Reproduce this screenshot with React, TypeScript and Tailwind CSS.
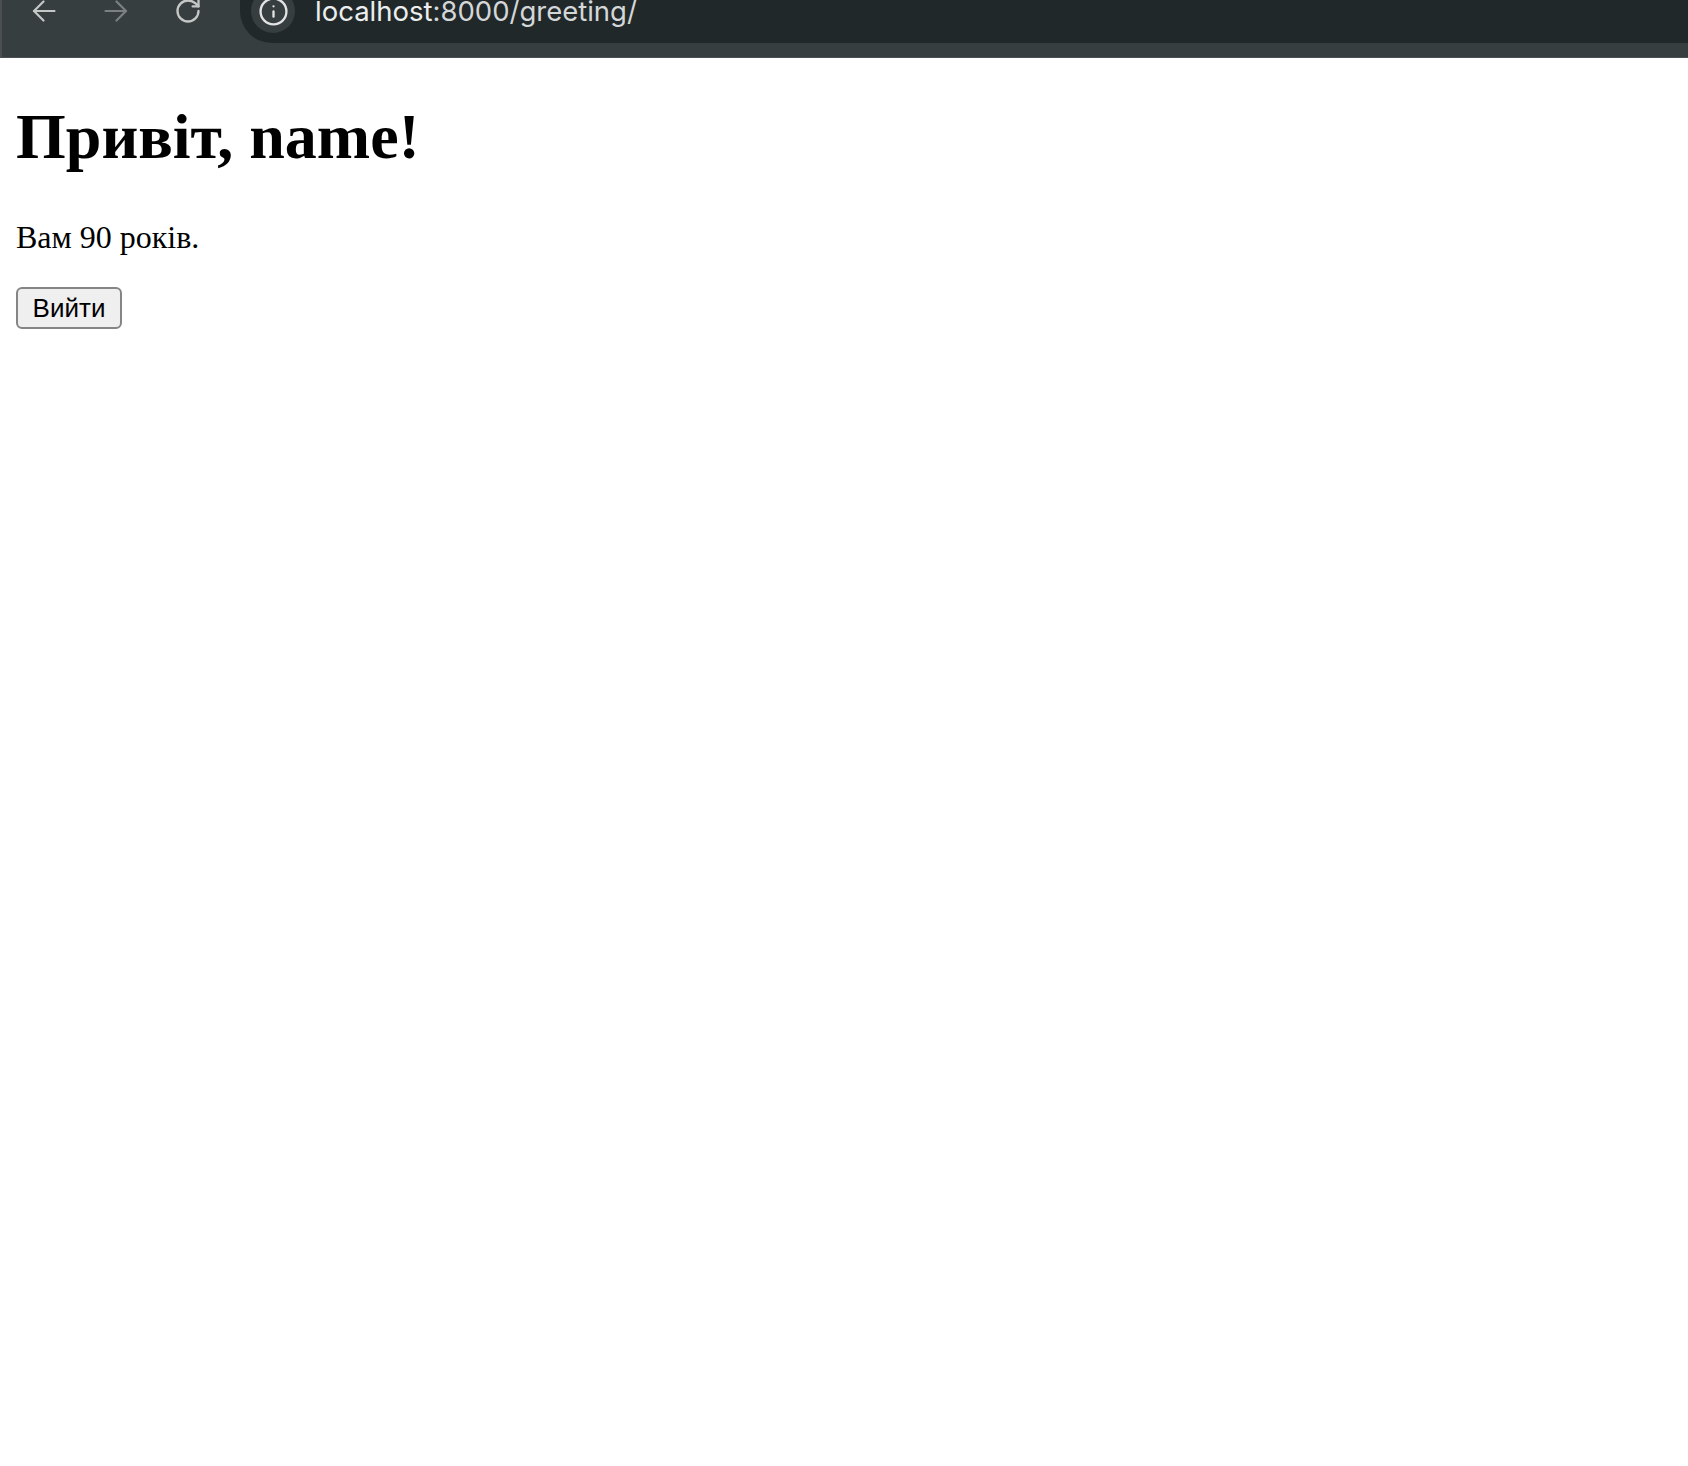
import { Info, RotateCw } from "lucide-react"

function Arrow({ dir, color }: { dir: "left" | "right"; color: string }) {
    return (
        <svg width="24" height="22" viewBox="0 0 24 22" fill="none" stroke={color} strokeWidth="2.2" strokeLinecap="round" strokeLinejoin="round" className={dir === "right" ? "rotate-180" : ""}>
            <path d="M22.5 11H2" />
            <path d="M11.5 1.5 2 11l9.5 9.5" />
        </svg>
    )
}

export default function App() {
    return (
        <div className="min-h-screen bg-white font-['Liberation_Serif',serif] text-black">
            {/* browser chrome, cut off at the top */}
            <div className="flex h-[58px] border-b border-l-2 border-[#4b4f51] bg-[#373e40]">
                <div className="flex h-[21px] items-center pl-[30px]">
                    <Arrow dir="left" color="#c4c7c5" />
                    <div className="ml-[48px]">
                        <Arrow dir="right" color="#7b8082" />
                    </div>
                    <RotateCw className="ml-[46px] text-[#c4c7c5]" size={28} strokeWidth={2} />
                </div>
                <div className="ml-[38px] h-[43px] flex-1 rounded-bl-[32px] bg-[#212829]">
                    <div className="flex h-[22px] items-center">
                        <div className="ml-[11px] flex h-[44px] w-[44px] shrink-0 items-center justify-center rounded-full bg-[#373e40]">
                            <Info className="text-[#e3e3e3]" size={31} strokeWidth={1.8} />
                        </div>
                        <span className="ml-[20px] font-['Inter',sans-serif] text-[27.5px] leading-[22px]">
                            <span className="text-[#eceeef]">localhost</span>
                            <span className="text-[#d4d7d8]">:8000/greeting/</span>
                        </span>
                    </div>
                </div>
            </div>

            <div className="pl-[16px]">
                <h1 className="mt-[47px] text-[64px] leading-[64px] font-bold">Привіт, name!</h1>
                <p className="mt-[52px] text-[32px] leading-[32px]">Вам 90 років.</p>
                <button className="mt-[34px] flex h-[42px] w-[106px] items-center justify-center rounded-[6px] border-2 border-[#858585] bg-[#efefef] font-['Liberation_Sans',Arial,sans-serif] text-[26px] leading-none text-black">
                    Вийти
                </button>
            </div>
        </div>
    )
}
